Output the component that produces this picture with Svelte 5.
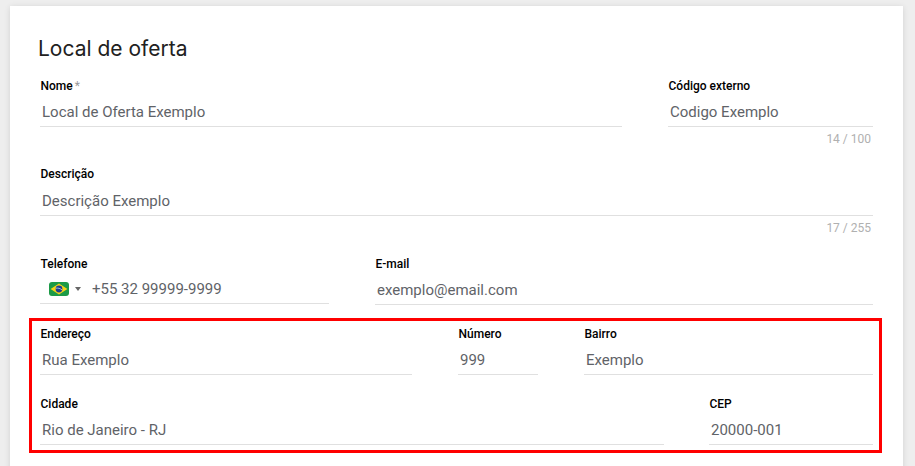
<script>
  const row1 = [
    { label: 'Nome', req: true, value: 'Local de Oferta Exemplo', w: 'grow' },
    { label: 'Código externo', value: 'Codigo Exemplo', count: '14 / 100', w: 'w205' }
  ];
</script>

<div class="page">
  <main class="card">
    <h1>Local de oferta</h1>

    <div class="row r1">
      {#each row1 as f}
        <div class="field {f.w}">
          <div class="label">{f.label}{#if f.req}<span class="req">*</span>{/if}</div>
          <div class="input">{f.value}</div>
          {#if f.count}<div class="count">{f.count}</div>{/if}
        </div>
      {/each}
    </div>

    <div class="row r2">
      <div class="field grow">
        <div class="label">Descrição</div>
        <div class="input desc">Descrição Exemplo</div>
        <div class="count">17 / 255</div>
      </div>
    </div>

    <div class="row r3">
      <div class="field w289">
        <div class="label">Telefone</div>
        <div class="input phone">
          <svg class="flag" width="20" height="14" viewBox="0 0 20 14" aria-hidden="true">
            <rect width="20" height="14" rx="3" fill="#1c9a47"/>
            <path d="M10 1.4 18.4 7 10 12.6 1.6 7z" fill="#f7d417"/>
            <circle cx="10" cy="7" r="3.4" fill="#1f3f8f"/>
            <path d="M6.8 6.2c2.2-.4 4.5.2 6.2 1.7" stroke="#e8eef2" stroke-width=".7" fill="none"/>
          </svg>
          <span class="caret"></span>
          <span class="num">+55 32 99999-9999</span>
        </div>
      </div>
      <div class="field grow">
        <div class="label">E-mail</div>
        <div class="input email">exemplo@email.com</div>
      </div>
    </div>

    <section class="box">
      <div class="row">
        <div class="field w372">
          <div class="label">Endereço</div>
          <div class="input">Rua Exemplo</div>
        </div>
        <div class="field w80">
          <div class="label">Número</div>
          <div class="input">999</div>
        </div>
        <div class="field grow">
          <div class="label">Bairro</div>
          <div class="input">Exemplo</div>
        </div>
      </div>
      <div class="row r5">
        <div class="field grow">
          <div class="label">Cidade</div>
          <div class="input">Rio de Janeiro - RJ</div>
        </div>
        <div class="field w164">
          <div class="label">CEP</div>
          <div class="input">20000-001</div>
        </div>
      </div>
    </section>
  </main>
</div>

<style>
  :global(body) {
    margin: 0;
    background: #eeeeee;
    font-family: Roboto, "Liberation Sans", sans-serif;
  }
  .page {
    height: 466px;
    overflow: hidden;
    padding: 6px 12px 0 10px;
    box-sizing: border-box;
  }
  .card {
    background: #fff;
    height: 500px;
    padding: 31px 30px 0 30px;
    box-sizing: border-box;
    box-shadow: 0 1px 6px rgba(0, 0, 0, 0.12);
  }
  h1 {
    margin: 0 0 0 -2px;
    font-family: Inter, sans-serif;
    font-weight: 400;
    font-size: 21px;
    line-height: 24px;
    color: #212121;
  }
  .row {
    display: flex;
    gap: 46px;
  }
  .r1 { margin-top: 17px; }
  .r2 { margin-top: 19px; }
  .r3 { margin-top: 20px; }
  .r5 { margin-top: 21px; gap: 45px; }
  .grow { flex: 1; min-width: 0; }
  .w205 { width: 205px; }
  .w289 { width: 289px; }
  .w372 { width: 372px; }
  .w80 { width: 80px; }
  .w164 { width: 164px; }
  .label {
    font-size: 12px;
    font-weight: 500;
    line-height: 16px;
    padding-left: 0.5px;
    color: #000;
  }
  .req {
    color: #999;
    font-weight: 400;
    margin-left: 2px;
  }
  .input {
    height: 28px;
    line-height: 28px;
    padding: 4px 0 0 2px;
    font-size: 15px;
    color: #5f6368;
    border-bottom: 1px solid #e0e0e0;
  }
  .desc { padding-top: 5px; }
  .phone {
    display: flex;
    align-items: center;
    padding: 3px 0 0 9px;
  }
  .flag { flex: none; }
  .caret {
    width: 0;
    height: 0;
    margin-left: 6px;
    border-left: 3px solid transparent;
    border-right: 3px solid transparent;
    border-top: 4px solid #666;
  }
  .num { margin-left: 11px; }
  .email { height: 27px; line-height: 27px; padding-top: 5px; }
  .count {
    font-size: 12px;
    line-height: 16px;
    margin-top: 4px;
    padding-right: 2px;
    text-align: right;
    color: #b0b0b0;
  }
  .box {
    margin: 13px -9px 0 -11px;
    padding: 5px 6px 5px 8px;
    border: 3px solid #ff0000;
  }
</style>
